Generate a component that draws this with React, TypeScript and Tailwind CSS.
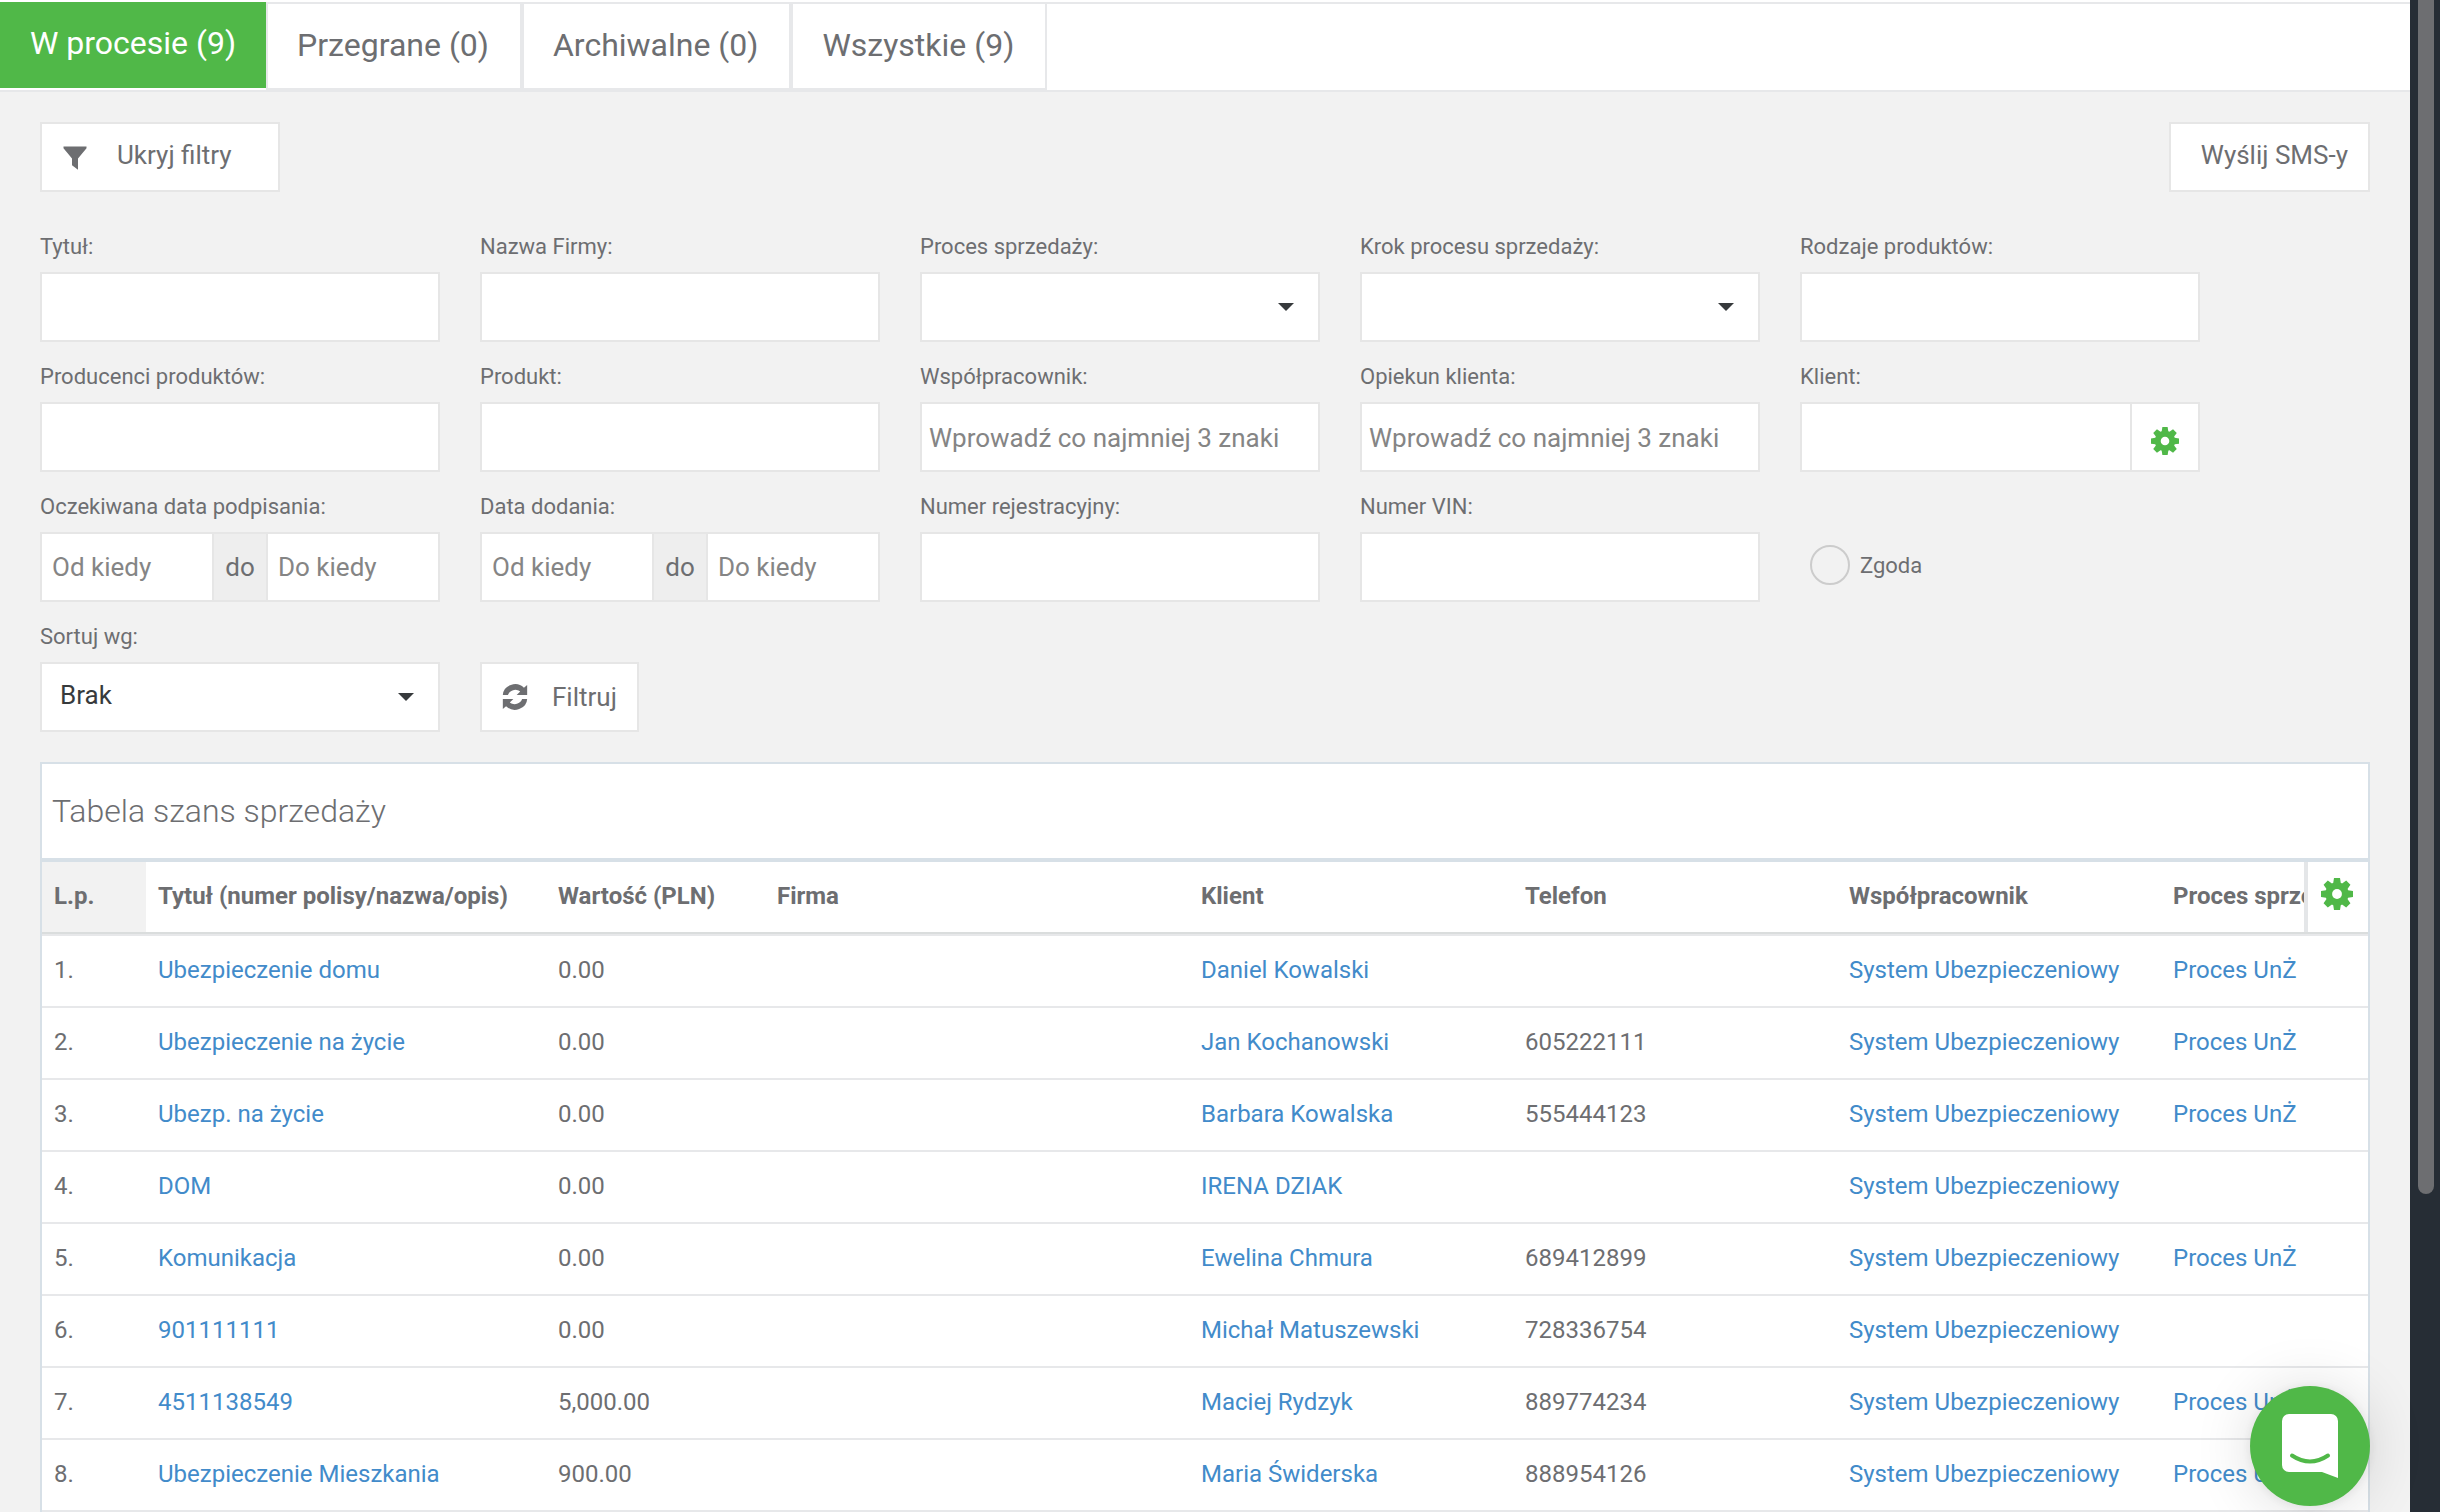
import type {ReactNode} from "react";

type Lead = {
    title: string;
    value: string;
    client: string;
    phone: string;
    process: string;
};

const TABS = ["Przegrane (0)", "Archiwalne (0)", "Wszystkie (9)"];

const COLUMNS = ["L.p.", "Tytuł (numer polisy/nazwa/opis)", "Wartość (PLN)", "Firma", "Klient", "Telefon", "Współpracownik", "Proces sprzedaży"];

const LEADS: Lead[] = [
    {title: "Ubezpieczenie domu", value: "0.00", client: "Daniel Kowalski", phone: "", process: "Proces UnŻ"},
    {title: "Ubezpieczenie na życie", value: "0.00", client: "Jan Kochanowski", phone: "605222111", process: "Proces UnŻ"},
    {title: "Ubezp. na życie", value: "0.00", client: "Barbara Kowalska", phone: "555444123", process: "Proces UnŻ"},
    {title: "DOM", value: "0.00", client: "IRENA DZIAK", phone: "", process: ""},
    {title: "Komunikacja", value: "0.00", client: "Ewelina Chmura", phone: "689412899", process: "Proces UnŻ"},
    {title: "901111111", value: "0.00", client: "Michał Matuszewski", phone: "728336754", process: ""},
    {title: "4511138549", value: "5,000.00", client: "Maciej Rydzyk", phone: "889774234", process: "Proces UnŻ"},
    {title: "Ubezpieczenie Mieszkania", value: "900.00", client: "Maria Świderska", phone: "888954126", process: "Proces UnŻ"},
];

const BOX = "h-[70px] w-full border-2 border-[#e6e6e6] bg-white";

function CogIcon({className}: { className: string }) {
    return (
        <svg viewBox="-16 -16 32 32" fill="currentColor" className={className} aria-hidden="true">
            <circle r="11.6"/>
            {[0, 45, 90, 135].map((angle) => (
                <path key={angle} transform={`rotate(${angle})`}
                      d="M-3 -16H3L3.800 -11L5 -9V9L3.800 11L3 16H-3L-3.800 11L-5 9V-9L-3.800 -11Z"/>
            ))}
            <circle r="4.9" fill="#fff"/>
        </svg>
    );
}

function FilterIcon({className}: { className: string }) {
    return (
        <svg viewBox="0 0 24 24" fill="currentColor" className={className} aria-hidden="true">
            <path d="M0.500 0.500h23v1.800L15 12.500v11.300L9 19.200v-6.700L0.500 2.300z"/>
        </svg>
    );
}

function RefreshIcon({className}: { className: string }) {
    return (
        <svg viewBox="0 0 24 25" fill="currentColor" className={className} aria-hidden="true">
            <path d="M0.300 10.600A11.800 11 0 0 1 20.600 3.600L23.700 1V10.600H13.600L17 7.200A7.400 7 0 0 0 5.200 10.600Z"/>
            <path d="M23.700 14.400A11.800 11 0 0 1 3.400 21.400L0.300 24V14.400H10.400L7 17.800A7.400 7 0 0 0 18.800 14.400Z"/>
        </svg>
    );
}

function Field({label, id, children}: { label: string; id: string; children: ReactNode }) {
    return (
        <div className="flex flex-col">
            <label htmlFor={id} className="flex h-[60px] items-center pt-[10px] text-[22px] leading-8">{label}</label>
            {children}
        </div>
    );
}

function TextField({label, id, placeholder}: { label: string; id: string; placeholder?: string }) {
    return (
        <Field label={label} id={id}>
            <input id={id} type="text" placeholder={placeholder}
                   className={`${BOX} px-[7px] pt-[2px] text-[26px] placeholder:text-[#858585]`}/>
        </Field>
    );
}

function SelectField({label, id, value}: { label: string; id: string; value: string }) {
    return (
        <Field label={label} id={id}>
            <div className="relative">
                <select id={id} className={`${BOX} appearance-none px-[18px] pb-1 text-[26px] text-[#373a3c]`}>
                    <option>{value}</option>
                </select>
                <svg viewBox="0 0 16 8" className="pointer-events-none absolute top-[31px] right-[26px] h-2 w-4" aria-hidden="true">
                    <path d="M0 0h16L8 8z" fill="#373a3c"/>
                </svg>
            </div>
        </Field>
    );
}

function DateRangeField({label, id}: { label: string; id: string }) {
    return (
        <Field label={label} id={id}>
            <div className={`${BOX} flex text-[26px]`}>
                <input id={id} type="text" placeholder="Od kiedy"
                       className="min-w-0 flex-1 px-[10px] placeholder:text-[#858585]"/>
                <span className="flex w-14 items-center justify-center border-x-2 border-[#e6e6e6] bg-[#eeeeee]">do</span>
                <input type="text" placeholder="Do kiedy" aria-label={`${label} do`}
                       className="min-w-0 flex-1 px-[10px] placeholder:text-[#858585]"/>
            </div>
        </Field>
    );
}

function Filters() {
    return (
        <form className="grid grid-cols-[repeat(5,minmax(0,400px))] gap-x-10 pt-5">
            <TextField label="Tytuł:" id="title"/>
            <TextField label="Nazwa Firmy:" id="company"/>
            <SelectField label="Proces sprzedaży:" id="process" value=""/>
            <SelectField label="Krok procesu sprzedaży:" id="step" value=""/>
            <TextField label="Rodzaje produktów:" id="kinds"/>

            <TextField label="Producenci produktów:" id="producers"/>
            <TextField label="Produkt:" id="product"/>
            <TextField label="Współpracownik:" id="coworker" placeholder="Wprowadź co najmniej 3 znaki"/>
            <TextField label="Opiekun klienta:" id="keeper" placeholder="Wprowadź co najmniej 3 znaki"/>
            <Field label="Klient:" id="client">
                <div className={`${BOX} flex`}>
                    <input id="client" type="text" className="min-w-0 flex-1 px-2 text-[26px]"/>
                    <button type="button" aria-label="Ustawienia klienta"
                            className="flex w-[68px] items-center justify-center border-l-2 border-[#e6e6e6] pt-2 text-[#50b848]">
                        <CogIcon className="size-7"/>
                    </button>
                </div>
            </Field>

            <DateRangeField label="Oczekiwana data podpisania:" id="signDate"/>
            <DateRangeField label="Data dodania:" id="addDate"/>
            <TextField label="Numer rejestracyjny:" id="plate"/>
            <TextField label="Numer VIN:" id="vin"/>
            <label className="flex h-[70px] items-center gap-[10px] self-end pb-1 pl-[10px] text-[22px]">
                <input type="checkbox" className="size-10 appearance-none rounded-full border-2 border-[#cccccc]"/>
                Zgoda
            </label>

            <SelectField label="Sortuj wg:" id="sort" value="Brak"/>
            <button type="submit"
                    className="flex h-[70px] items-center gap-6 self-end justify-self-start border-2 border-[#e6e6e6] bg-white px-5 text-[26px]">
                <RefreshIcon className="h-[26px] w-[26px]"/>
                Filtruj
            </button>
        </form>
    );
}

function LeadsTable() {
    return (
        <section className="mt-[30px] overflow-hidden border-2 border-[#d7e0e7] bg-white">
            <h2 className="flex h-[94px] items-center px-[10px] text-[32px] font-light">Tabela szans sprzedaży</h2>
            <div className="relative border-t-4 border-[#d7e0e7]">
                <table className="w-full table-fixed border-separate border-spacing-0 text-left text-2xl whitespace-nowrap">
                    <colgroup>
                        <col className="w-[104px]"/>
                        <col className="w-[400px]"/>
                        <col className="w-[219px]"/>
                        <col className="w-[424px]"/>
                        <col className="w-[324px]"/>
                        <col className="w-[324px]"/>
                        <col className="w-[324px]"/>
                        <col/>
                    </colgroup>
                    <thead>
                        <tr>
                            {COLUMNS.map((column) => (
                                <th key={column}
                                    className="h-[74px] border-b-2 border-[#e7e8ea] px-3 pb-1 font-bold shadow-[inset_0_-2px_0_#dadddd] first:bg-[#f2f2f2]">
                                    {column}
                                </th>
                            ))}
                        </tr>
                    </thead>
                    <tbody className="[&_td]:h-[72px] [&_td]:border-b-2 [&_td]:border-[#e7e8ea] [&_td]:px-3 [&_td]:pb-[2px]">
                        {LEADS.map((lead, index) => (
                            <tr key={lead.title}>
                                <td>{index + 1}.</td>
                                <td><a href="#" className="text-[#428bca]">{lead.title}</a></td>
                                <td>{lead.value}</td>
                                <td></td>
                                <td><a href="#" className="text-[#428bca]">{lead.client}</a></td>
                                <td>{lead.phone}</td>
                                <td><a href="#" className="text-[#428bca]">System Ubezpieczeniowy</a></td>
                                <td>{lead.process && <a href="#" className="text-[#428bca]">{lead.process}</a>}</td>
                            </tr>
                        ))}
                    </tbody>
                </table>
                {/* column settings, pinned over the last header cell */}
                <button type="button" aria-label="Ustawienia kolumn"
                        className="absolute top-0 right-0 flex h-[70px] w-16 items-center justify-center border-l-4 border-[#e4e6e8] bg-white pr-[2px] pb-[6px] text-[#50b848]">
                    <CogIcon className="size-8"/>
                </button>
            </div>
        </section>
    );
}

function ChatLauncher() {
    return (
        <button type="button" aria-label="Czat"
                className="fixed right-[70px] bottom-[6px] flex size-[120px] items-center justify-center rounded-full bg-[#50b848] shadow-[0_1px_12px_rgba(0,0,0,0.08),0_2px_60px_rgba(0,0,0,0.14)]">
            <svg viewBox="0 0 56 64" className="h-16 w-14" aria-hidden="true">
                <path d="M7 0h42a7 7 0 0 1 7 7v57l-16-6H7a7 7 0 0 1-7-7V7a7 7 0 0 1 7-7z" fill="#fff"/>
                <path d="M10 41.500q18 12 36 0" fill="none" stroke="#50b848" strokeWidth="4" strokeLinecap="round"/>
            </svg>
        </button>
    );
}

export default function App() {
    return (
        <div className="flex h-screen overflow-hidden bg-[#f2f2f2] font-[Roboto,sans-serif] text-[#6d6e71]">
            <main className="min-w-0 flex-1 border-t-2 border-white">
                <nav className="flex h-[90px] border-y-2 border-[#e7e8ea] bg-white text-[32px]">
                    <button type="button" className="-mt-[2px] h-[86px] bg-[#50b848] px-[30px] pb-1 text-white">
                        W procesie (9)
                    </button>
                    {TABS.map((tab) => (
                        <button key={tab} type="button" className="border-x-2 border-b-2 border-[#e7e8ea] pr-[31px] pb-[2px] pl-[29px]">
                            {tab}
                        </button>
                    ))}
                </nav>
                <div className="px-10 py-[30px]">
                    <div className="flex justify-between text-[26px]">
                        <button type="button"
                                className="flex h-[70px] items-center gap-[30px] border-2 border-[#e6e6e6] bg-white pr-[46px] pb-1 pl-[21px]">
                            <FilterIcon className="mt-[6px] size-6"/>
                            Ukryj filtry
                        </button>
                        <button type="button" className="h-[70px] border-2 border-[#e6e6e6] bg-white pr-5 pb-1 pl-[30px]">
                            Wyślij SMS-y
                        </button>
                    </div>
                    <Filters/>
                    <LeadsTable/>
                </div>
            </main>
            <div className="w-[30px] shrink-0 bg-[#262d35] px-2">
                <div className="h-[79vh] w-4 rounded-b-full bg-[#6d6e71]"/>
            </div>
            <ChatLauncher/>
        </div>
    );
}
